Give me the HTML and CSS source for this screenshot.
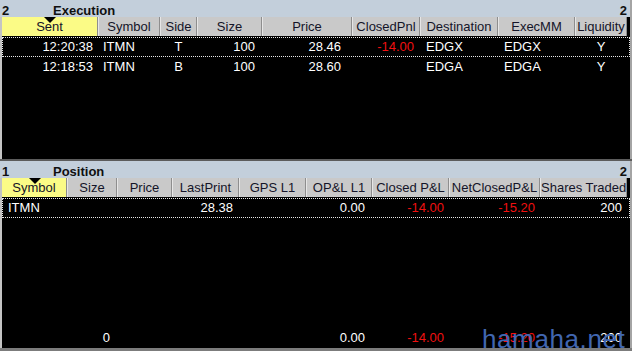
FILE: index.html
```html
<!DOCTYPE html>
<html lang="en">
<head>
    <meta charset="UTF-8">
    <title>Execution / Position</title>
    <link rel="stylesheet" href="styles.css">
</head>
<body>
<div class="window">

    <div class="panel exec">
        <div class="titlebar">
            <span class="num">2</span>
            <span class="name">Execution</span>
            <span class="num-right">2</span>
        </div>
        <div class="grid">
            <div class="row head">
                <div class="hcell sorted">Sent<span class="arrow"></span></div>
                <div class="hcell">Symbol</div>
                <div class="hcell">Side</div>
                <div class="hcell">Size</div>
                <div class="hcell">Price</div>
                <div class="hcell">ClosedPnl</div>
                <div class="hcell">Destination</div>
                <div class="hcell">ExecMM</div>
                <div class="hcell">Liquidity</div>
            </div>
            <div class="row data focus">
                <div class="r p5">12:20:38</div>
                <div class="l p5">ITMN</div>
                <div class="c">T</div>
                <div class="r p7">100</div>
                <div class="r p11">28.46</div>
                <div class="r p6 neg">-14.00</div>
                <div class="l p6">EDGX</div>
                <div class="l p6">EDGX</div>
                <div class="c">Y</div>
            </div>
            <div class="row data">
                <div class="r p5">12:18:53</div>
                <div class="l p5">ITMN</div>
                <div class="c">B</div>
                <div class="r p7">100</div>
                <div class="r p11">28.60</div>
                <div class="r p6 neg"></div>
                <div class="l p6">EDGA</div>
                <div class="l p6">EDGA</div>
                <div class="c">Y</div>
            </div>
        </div>
    </div>

    <div class="panel pos">
        <div class="titlebar">
            <span class="num">1</span>
            <span class="name">Position</span>
            <span class="num-right">2</span>
        </div>
        <div class="grid">
            <div class="row head">
                <div class="hcell sorted">Symbol<span class="arrow"></span></div>
                <div class="hcell">Size</div>
                <div class="hcell">Price</div>
                <div class="hcell">LastPrint</div>
                <div class="hcell">GPS L1</div>
                <div class="hcell">OP&amp;L L1</div>
                <div class="hcell">Closed P&amp;L</div>
                <div class="hcell">NetClosedP&amp;L</div>
                <div class="hcell">Shares Traded</div>
            </div>
            <div class="row data focus">
                <div class="l p6">ITMN</div>
                <div class="r p7"></div>
                <div class="r p6"></div>
                <div class="r p6">28.38</div>
                <div class="r p6"></div>
                <div class="r p7">0.00</div>
                <div class="r p5 neg">-14.00</div>
                <div class="r p5 neg">-15.20</div>
                <div class="r p5">200</div>
            </div>
            <div class="spacer"></div>
            <div class="row data total">
                <div class="l p6"></div>
                <div class="r p7">0</div>
                <div class="r p6"></div>
                <div class="r p6"></div>
                <div class="r p6"></div>
                <div class="r p7">0.00</div>
                <div class="r p5 neg">-14.00</div>
                <div class="r p5 neg">-15.20</div>
                <div class="r p5">200</div>
            </div>
        </div>
    </div>

    <div class="watermark">hamaha.net</div>
</div>
</body>
</html>
```

FILE: styles.css
```css
body {
    margin: 0;
    background: #000;
    font-family: "Liberation Sans", Arial, sans-serif;
    font-size: 13px;
}
.window {
    position: relative;
    width: 632px;
    height: 351px;
    display: flex;
    flex-direction: column;
    background: #a4a4a4;
    overflow: hidden;
}
.panel {
    display: flex;
    flex-direction: column;
}
.exec {
    height: 159px;
    border-bottom: 2px solid #5c5c5c;
}
.pos {
    height: 187px;
    border-bottom: 3px solid #7c7c7c;
}
.titlebar {
    height: 17px;
    box-sizing: border-box;
    padding-top: 4px;
    line-height: 13px;
    width: 630px;
    background: #c3cfdb;
    color: #101010;
    font-weight: bold;
    display: flex;
}
.num {
    width: 51px;
    padding-left: 2px;
}
.name {
    flex: 1;
}
.num-right {
    padding-right: 3px;
}
.grid {
    flex: 1;
    margin-left: 2px;
    width: 628px;
    background: #000;
    display: flex;
    flex-direction: column;
    box-shadow: -2px 0 0 #c4c4c4;
}
.row {
    display: grid;
}
.exec .row {
    grid-template-columns: 96px 62px 37px 65px 90px 68px 78px 77px 52px;
}
.pos .row {
    grid-template-columns: 65px 50px 55px 67px 67px 66px 77px 91px 87px;
}
.head {
    height: 19px;
    line-height: 19px;
    margin-bottom: 1px;
}
.hcell {
    position: relative;
    background: #c9c9c9;
    color: #141428;
    text-align: center;
    white-space: nowrap;
    overflow: hidden;
    box-sizing: border-box;
    border-left: 1px solid #e6e6e6;
    border-right: 1px solid #8e8e8e;
}
.hcell.sorted {
    background: #fbfb86;
    border-left: 0;
    overflow: visible;
}
.arrow {
    position: absolute;
    top: 0;
    left: 50%;
    margin-left: -6px;
    width: 0;
    height: 0;
    border-left: 6px solid transparent;
    border-right: 6px solid transparent;
    border-top: 6px solid #000;
}
.pos .arrow {
    margin-left: -5px;
}
.data {
    height: 20px;
    line-height: 20px;
    color: #fff;
    white-space: nowrap;
}
.data > div {
    overflow: hidden;
}
.focus {
    outline: 1px dotted #e8e8e8;
    outline-offset: -1px;
}
.spacer {
    flex: 1;
}
.l { text-align: left; }
.r { text-align: right; }
.c { text-align: center; }
.l.p5 { padding-left: 5px; }
.l.p6 { padding-left: 6px; }
.r.p5 { padding-right: 5px; }
.r.p6 { padding-right: 6px; }
.r.p7 { padding-right: 7px; }
.r.p11 { padding-right: 11px; }
.neg {
    color: #f01010;
}
.watermark {
    position: absolute;
    left: 482px;
    top: 326px;
    font-size: 26px;
    line-height: 26px;
    letter-spacing: 0.6px;
    color: #4166b0;
    white-space: nowrap;
}
```
